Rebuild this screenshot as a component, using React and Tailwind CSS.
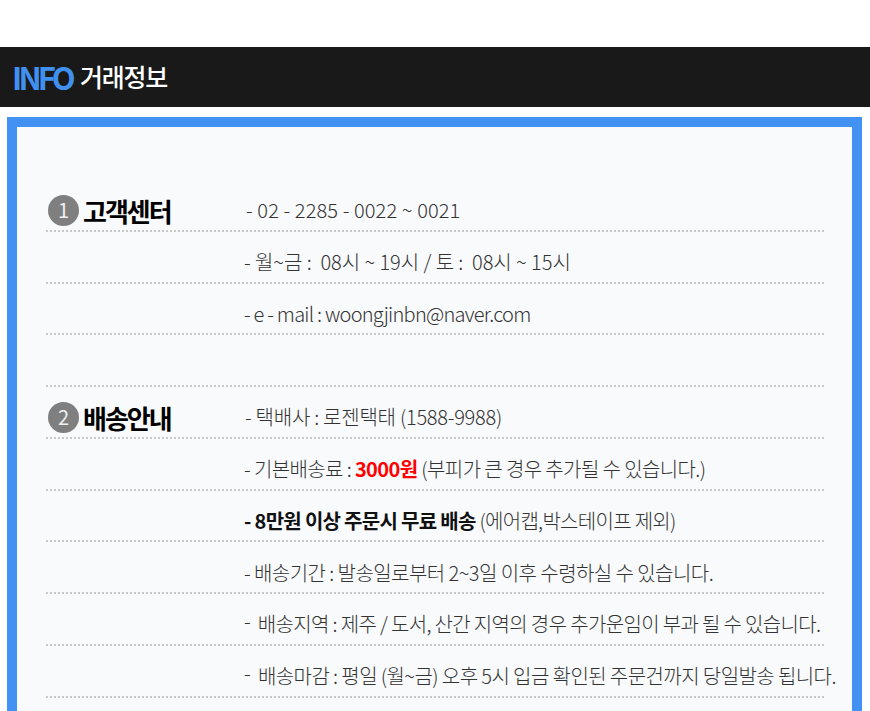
import React from 'react';

const Row = ({ num, title, children, textClass = 'pl-[198px] tracking-[-0.5px]' }) => (
  <div className="relative flex h-[51.75px] items-center whitespace-nowrap border-b-2 border-dotted border-[#c8c8c8]">
    {num && (
      <div className="absolute left-[2px] top-[11px] flex items-center">
        <span className="flex h-[31px] w-[31px] items-center justify-center rounded-full bg-[#7f7f7f] pb-[2px] text-[20px] font-normal text-[#f0f0f0]">{num}</span>
        <span className="ml-[4px] text-[26px] font-bold tracking-[-2px] text-black">{title}</span>
      </div>
    )}
    <div className={`${textClass} pt-[11px] text-[20px] font-light text-[#333]`}>{children}</div>
  </div>
);

export default function App() {
  return (
    <div className="h-[711px] overflow-hidden bg-white font-['Noto_Sans_CJK_KR','Noto_Sans',sans-serif]">
      <div className="h-[47px]" />
      <div className="flex h-[60px] items-center bg-[#191919] pl-[12px]">
        <span className="text-[31px] font-bold tracking-[-3.8px] text-[#4090f0]">INFO</span>
        <span className="ml-[8px] text-[25px] font-medium tracking-[-1.2px] text-white">거래정보</span>
      </div>
      <div className="ml-[7px] mr-[8px] mt-[10px] border-[10px] border-[#4292f3] bg-[#f9fafc] pb-[60px] pl-[29px] pr-[28px] pt-[53px]">
        <Row num="1" title="고객센터" textClass="pl-[200px] tracking-[0.12px]">- 02 - 2285 - 0022 ~ 0021</Row>
        <Row textClass="pl-[198px] tracking-[-0.05px]">- 월~금 :&nbsp; 08시 ~ 19시 / 토 :&nbsp; 08시 ~ 15시</Row>
        <Row textClass="pl-[198px] tracking-[-0.75px]">- e - mail : woongjinbn@naver.com</Row>
        <Row />
        <Row num="2" title="배송안내" textClass="pl-[199px] tracking-[-0.25px]">- 택배사 : 로젠택태 (1588-9988)</Row>
        <Row textClass="pl-[198px] tracking-[-0.6px]">- 기본배송료 : <b className="font-bold text-[#ff0000]">3000원</b> (부피가 큰 경우 추가될 수 있습니다.)</Row>
        <Row textClass="pl-[198px] tracking-[-0.7px]"><b className="font-bold text-[#111]">- 8만원 이상 주문시 무료 배송</b> (에어캡,박스테이프 제외)</Row>
        <Row textClass="pl-[198px] tracking-[-0.55px]">- 배송기간 : 발송일로부터 2~3일 이후 수령하실 수 있습니다.</Row>
        <Row textClass="pl-[198px] tracking-[-0.65px]"><span className="relative -top-[3px] mr-[4px]">-</span> 배송지역 : 제주 / 도서, 산간 지역의 경우 추가운임이 부과 될 수 있습니다.</Row>
        <Row textClass="pl-[198px] tracking-[-0.58px]"><span className="relative -top-[3px] mr-[4px]">-</span> 배송마감 : 평일 (월~금) 오후 5시 입금 확인된 주문건까지 당일발송 됩니다.</Row>
      </div>
    </div>
  );
}
